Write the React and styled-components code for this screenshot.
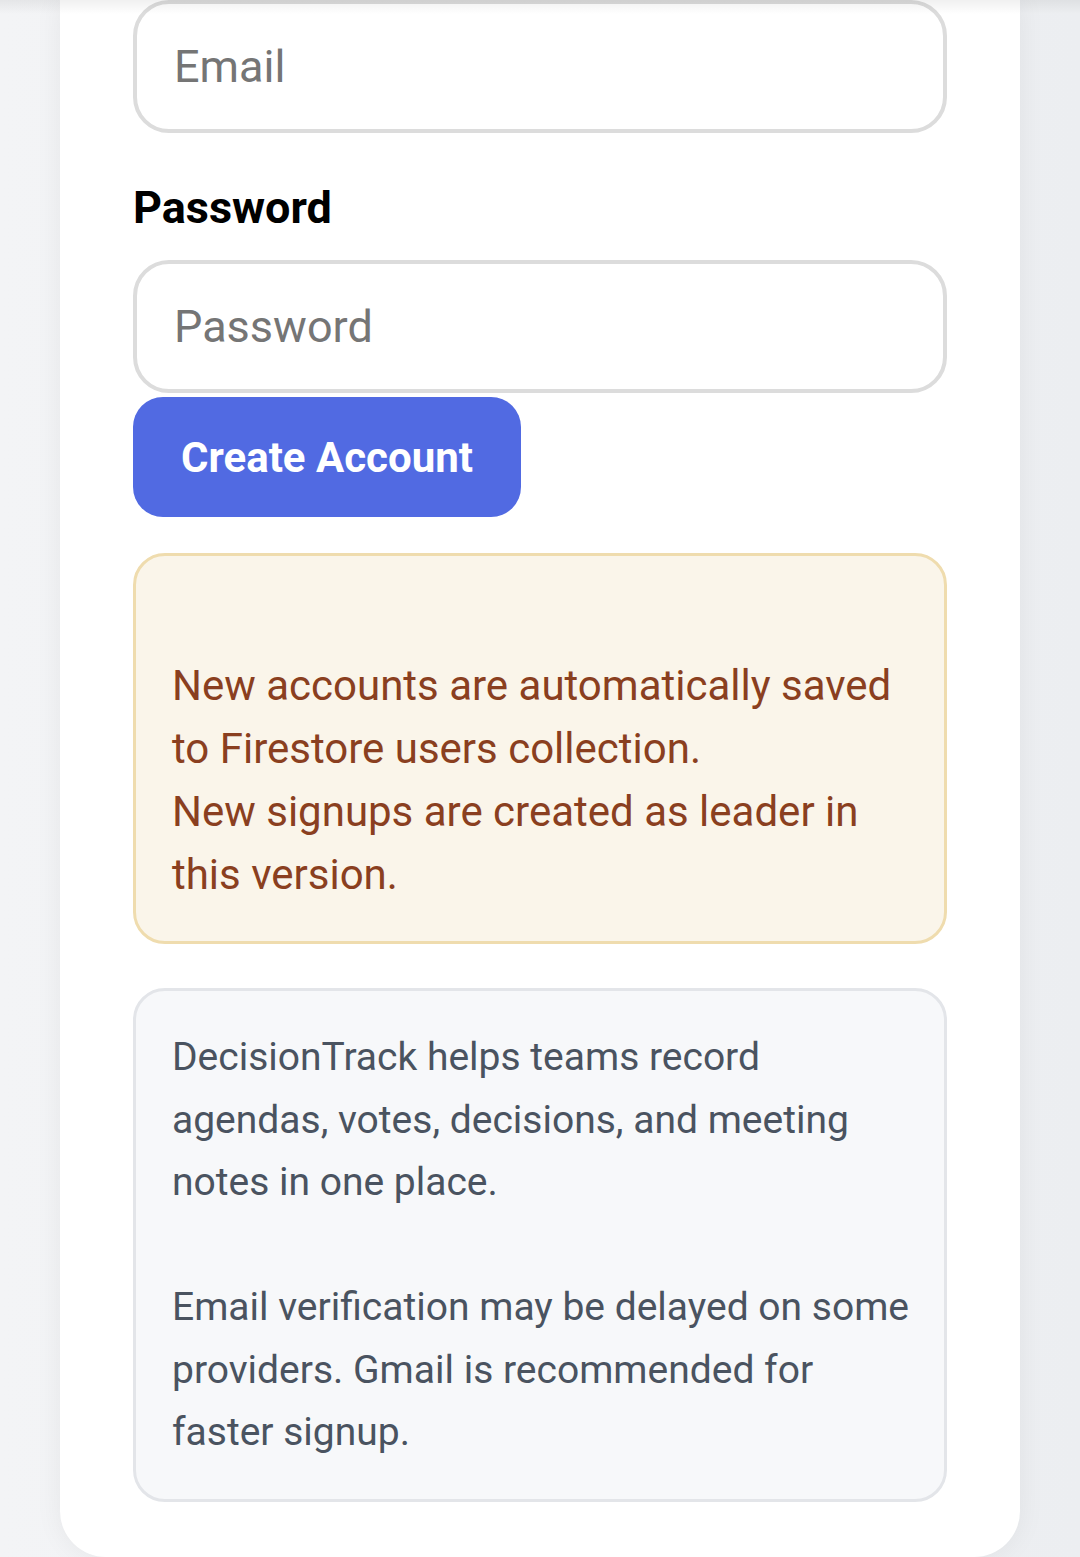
import React from 'react';
import styled, { createGlobalStyle } from 'styled-components';

const GlobalStyle = createGlobalStyle`
  html, body {
    margin: 0;
    padding: 0;
    background: #f2f3f5;
    font-family: Roboto, 'Noto Sans', sans-serif;
  }
  * { box-sizing: border-box; }
`;

const Page = styled.div`
  position: relative;
  height: 1557px;
  overflow: hidden;
  padding: 0 60px;
  background: linear-gradient(90deg, #f3f4f6 0%, #eceef1 100%);
`;

const TopShade = styled.div`
  position: absolute;
  top: 0;
  left: 0;
  right: 0;
  height: 14px;
  background: linear-gradient(180deg, rgba(0,0,0,0.06), rgba(0,0,0,0));
  pointer-events: none;
`;

const Card = styled.div`
  background: #ffffff;
  border-radius: 0 0 46px 46px;
  padding: 0 73px 55px;
  box-shadow: 0 0 28px rgba(0, 0, 0, 0.06);
  display: flex;
  flex-direction: column;

  & > * {
    flex-shrink: 0;
  }
`;

const Input = styled.input`
  display: block;
  width: 100%;
  height: 133px;
  border: 4px solid #dcdcdc;
  border-radius: 36px;
  padding: 0 37px;
  font-family: Roboto, sans-serif;
  font-size: 45px;
  color: #222;
  background: #fff;
  outline: none;

  &::placeholder {
    color: #757575;
  }
`;

const Label = styled.label`
  display: block;
  font-family: Roboto, sans-serif;
  font-weight: 700;
  font-size: 45px;
  line-height: 50px;
  color: #000;
  margin: 50px 0 27px;
`;

const Button = styled.button`
  align-self: flex-start;
  margin-top: 4px;
  height: 120px;
  padding: 0 48px;
  border: none;
  border-radius: 30px;
  background: #516ae2;
  color: #fff;
  font-family: Roboto, sans-serif;
  font-weight: 700;
  font-size: 42px;
`;

const Notice = styled.div`
  margin-top: ${p => p.gap}px;
  padding: 35px ${p => (p.tone === 'warn' ? 36 : 30)}px 35px 36px;
  border: 3px solid ${p => (p.tone === 'warn' ? '#efdcae' : '#e3e5e9')};
  background: ${p => (p.tone === 'warn' ? '#faf5ea' : '#f7f8fa')};
  color: ${p => (p.tone === 'warn' ? '#8a3f20' : '#4a5360')};
  border-radius: 32px;
  font-family: Roboto, sans-serif;
  font-size: ${p => (p.tone === 'warn' ? 42 : 39)}px;
  line-height: ${p => (p.tone === 'warn' ? 63 : 62.5)}px;
`;

const Line = styled.div`
  min-height: 1lh;
`;

export default function App() {
  return (
    <>
      <GlobalStyle />
      <Page>
        <Card>
          <Input placeholder="Email" />
          <Label>Password</Label>
          <Input type="password" placeholder="Password" />
          <Button>Create Account</Button>
          <Notice tone="warn" gap={36}>
            <Line />
            <Line>New accounts are automatically saved to Firestore users collection.</Line>
            <Line>New signups are created as leader in this version.</Line>
          </Notice>
          <Notice gap={44}>
            <Line>DecisionTrack helps teams record agendas, votes, decisions, and meeting notes in one place.</Line>
            <Line />
            <Line>Email verification may be delayed on some providers. Gmail is recommended for faster signup.</Line>
          </Notice>
        </Card>
        <TopShade />
      </Page>
    </>
  );
}
